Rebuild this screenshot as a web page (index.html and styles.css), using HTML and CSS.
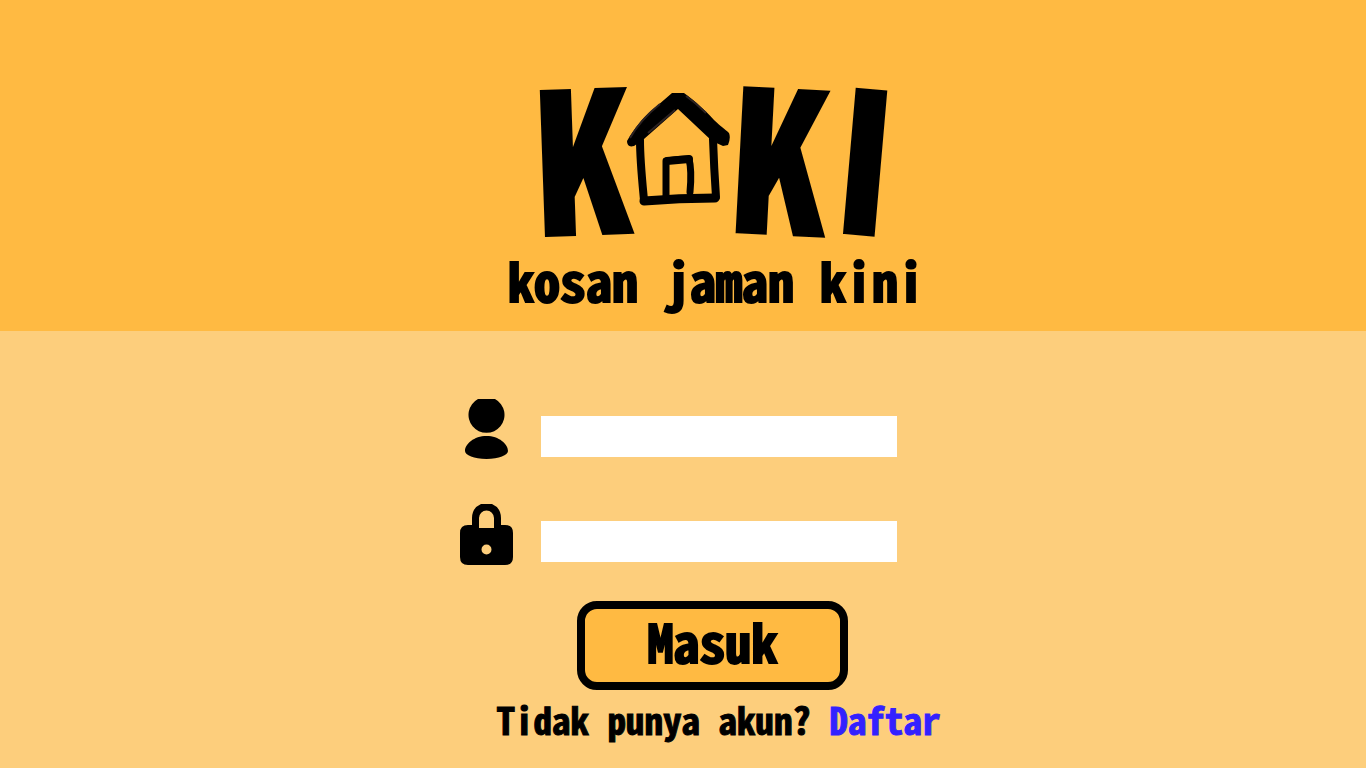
FILE: index.html
```
<!DOCTYPE html>
<html lang="id">
<head>
<meta charset="utf-8">
<meta name="viewport" content="width=device-width, initial-scale=1">
<title>KOKI - kosan jaman kini</title>
<link rel="stylesheet" href="styles.css">
</head>
<body>
<header class="hero">
  <h1 class="logo">
    <span class="letter letter-k1">K</span>
    <svg class="house" viewBox="0 0 104 116" role="img" aria-label="O">
      <path d="M46 1H58C70 10 79 18 88 28C94 34 99 37 103 41Q105 46 102 53L97 54L86 49L52 17L18 47L8 54Q1 56 1 49C9 35 19 23 31 14Z"/>
      <path d="M4 46C12 32 24 20 34 12M22 41L49 18M60 4Q70 11 80 21" fill="none" stroke="#2c2222" stroke-width="2"/>
      <g fill="none" stroke="#000" stroke-linecap="round" stroke-linejoin="round">
        <path d="M14 48C14 68 16 87 18 108" stroke-width="8"/>
        <path d="M18 109Q53 106 89 106" stroke-width="9"/>
        <path d="M87 47Q88 76 90 105" stroke-width="8"/>
        <path d="M40 105V69Q53 67 63 67Q66 78 64 100" stroke-width="7"/>
        <path d="M41 69L63 67" stroke-width="8"/>
      </g>
    </svg>
    <span class="letter letter-k2">K</span>
    <span class="letter letter-i">I</span>
  </h1>
  <p class="tagline">kosan jaman kini</p>
</header>
<main class="panel">
  <form class="login">
    <div class="field">
      <label for="user"><svg class="icon" viewBox="0 0 53 61" role="img" aria-label="Nama pengguna"><path d="M18 0H35A18 18 0 1 1 18 0ZM26.500 37C14 37 5 45 5 52C5 56 14 60 26.500 60C39 60 48 56 48 52C48 45 39 37 26.500 37Z"/></svg></label>
      <input id="user" class="text-box" type="text" autocomplete="username">
    </div>
    <div class="field">
      <label for="pass"><svg class="icon" viewBox="0 0 53 61" role="img" aria-label="Kata sandi"><path fill-rule="evenodd" d="M12 21V14Q12 4 21 0H32Q41 4 41 14V21H45Q53 21 53 29V53Q53 61 45 61H8Q0 61 0 53V29Q0 21 8 21ZM19 24H34V14A7.500 7.500 0 0 0 19 14ZM26.500 40.500A5 5 0 1 0 26.500 50.500A5 5 0 1 0 26.500 40.500Z"/></svg></label>
      <input id="pass" class="text-box" type="password" autocomplete="current-password">
    </div>
    <button class="submit" type="submit">Masuk</button>
  </form>
  <p class="signup">Tidak punya akun? <a href="#daftar">Daftar</a></p>
</main>
</body>
</html>
```
FILE: styles.css
```
* { box-sizing: border-box; }

body {
  margin: 0;
  min-height: 100vh;
  display: flex;
  flex-direction: column;
  background: #fdce7c;
  color: #000;
  font-family: "Noto Sans Mono CJK SC", "DejaVu Sans Mono", monospace;
  font-weight: 700;
}

.hero {
  display: flex;
  flex-direction: column;
  align-items: center;
  padding: 80px 0 17px 66px;
  background: #ffba42;
}

.logo {
  display: flex;
  margin: 0;
  height: 166px;
  font-size: 194px;
  line-height: 140px;
}

.letter {
  -webkit-text-stroke: 3px #000;
}

.letter-k1 { transform: rotate(-2deg); }
.letter-k2 { transform: rotate(3deg); }

.letter-i {
  margin-left: 4px;
  font-family: "Noto Sans CJK SC", sans-serif;
  transform: rotate(5deg);
}

.house {
  width: 104px;
  height: 116px;
  margin: 12px 2px 0 -6px;
}

.tagline {
  margin: 0;
  font-size: 52px;
  line-height: 68px;
  -webkit-text-stroke: 2px #000;
}

.panel {
  display: flex;
  flex-direction: column;
  align-items: center;
  padding: 68px 0 16px 66px;
}

.login {
  display: flex;
  flex-direction: column;
  align-items: center;
}

.field {
  display: flex;
  gap: 28px;
  height: 61px;
  margin: 0 75px 44px 0;
}

.field + .field { margin-bottom: 36px; }

.icon {
  display: block;
  width: 53px;
  height: 61px;
}

.text-box {
  width: 356px;
  height: 41px;
  margin-top: 17px;
  padding: 0 12px;
  border: 0;
  border-radius: 0;
  background: #fff;
  font: inherit;
  font-size: 24px;
}

.submit {
  width: 271px;
  height: 89px;
  margin-right: 7px;
  padding: 0 0 10px;
  border: 8px solid #000;
  border-radius: 20px;
  background: #ffba42;
  color: #000;
  font: inherit;
  font-size: 52px;
  line-height: 60px;
  -webkit-text-stroke: 2px #000;
}

.signup {
  margin: 5px 0 0 5px;
  font-size: 37px;
  line-height: 48px;
  -webkit-text-stroke: 1px currentColor;
}

.signup a {
  color: #3321ff;
  text-decoration: none;
}
```
